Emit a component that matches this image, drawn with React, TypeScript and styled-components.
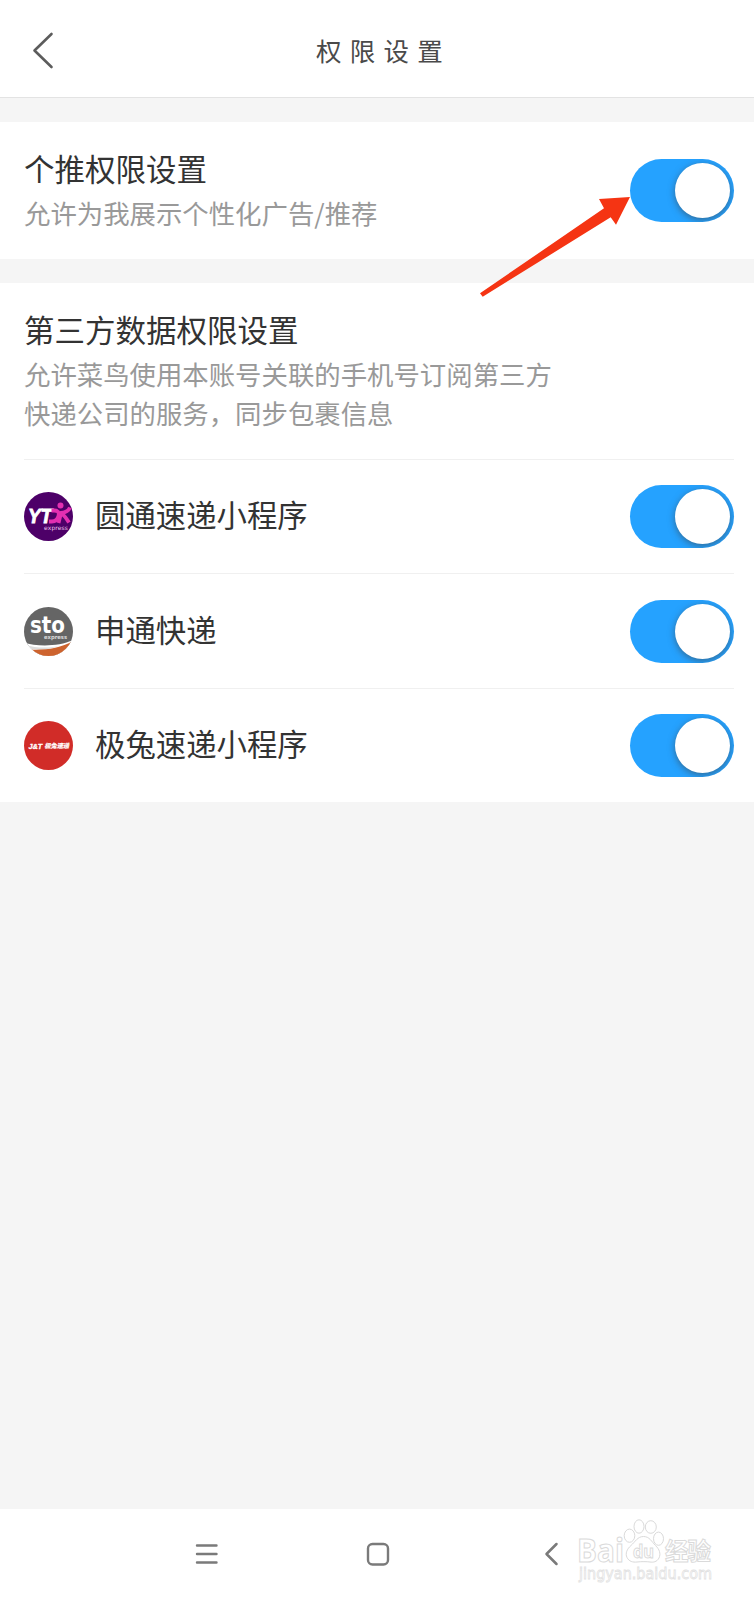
import React from 'react';
import styled, { createGlobalStyle } from 'styled-components';

const sans = '"Noto Sans CJK SC", sans-serif';

const GlobalStyle = createGlobalStyle`
  * { box-sizing: border-box; }
  body { margin: 0; background: #f5f5f5; font-family: ${sans}; color: #333; }
  svg { display: block; }
`;

const Screen = styled.div`
  position: relative;
  display: flex;
  flex-direction: column;
  width: 754px;
  height: 1600px;
  overflow: hidden;
  background: #f5f5f5;
`;

const Header = styled.header`
  display: grid;
  grid-template-columns: 80px 1fr 80px;
  align-items: center;
  height: 98px;
  background: #fff;
  border-bottom: 1px solid #e3e3e3;
`;

const BackButton = styled.button`
  display: flex;
  align-items: center;
  width: 80px;
  height: 64px;
  padding: 5px 0 0 30px;
  border: 0;
  background: none;
`;

const PageTitle = styled.h1`
  margin: 2px 0 0;
  text-align: center;
  font: 400 25.5px/40px "KaiTi", "Kaiti SC", "AR PL UKai CN", ${sans};
  letter-spacing: 8.2px;
  text-indent: 13px;
  color: #4a4a4a;
`;

const Card = styled.section<{ $top: number; $height: number }>`
  flex: none;
  margin-top: ${(p) => p.$top}px;
  height: ${(p) => p.$height}px;
  background: #fff;
`;

const Setting = styled.div<{ $height: number }>`
  display: flex;
  justify-content: space-between;
  height: ${(p) => p.$height}px;
  padding: 25px 20px 0 24px;
`;

const SettingTitle = styled.h2`
  margin: 0;
  font-weight: 400;
  font-size: 30.5px;
  line-height: 42px;
  white-space: nowrap;
`;

const SettingNote = styled.p`
  margin: 4px 0 0;
  font-size: 26.4px;
  line-height: 39.3px;
  color: #999;
  white-space: nowrap;
`;

const SwitchTrack = styled.button`
  display: flex;
  flex: none;
  align-items: center;
  justify-content: flex-end;
  width: 104px;
  height: 63px;
  padding: 0 4px;
  border: 0;
  border-radius: 32px;
  background: #25a2ff;
  overflow: hidden;
`;

const SwitchKnob = styled.span`
  width: 55px;
  height: 55px;
  border-radius: 50%;
  background: #fff;
  box-shadow: 0 2px 7px rgba(60, 60, 60, 0.55);
`;

const SwitchSlot = styled.div`
  padding-top: 12px;
`;

const CourierList = styled.ul`
  margin: 0;
  padding: 0 20px 0 24px;
  list-style: none;
`;

const CourierRow = styled.li`
  display: flex;
  align-items: center;
  height: 114.4px;
  border-top: 1px solid #f0f0f0;
`;

const CourierName = styled.span`
  flex: 1;
  margin: -5px 0 0 22px;
  font-size: 30.4px;
  line-height: 42px;
`;

const NavBar = styled.nav`
  display: flex;
  align-items: center;
  height: 91px;
  margin-top: auto;
  padding: 0 0 1px 194px;
  background: #fff;
`;

const NavItem = styled.div<{ $gap?: number }>`
  margin-left: ${(p) => p.$gap ?? 0}px;
`;

const Pointer = styled.svg`
  position: absolute;
  left: 476px;
  top: 190px;
`;

const Watermark = styled.svg`
  position: absolute;
  left: 570px;
  top: 1510px;
`;

function Toggle() {
  return (
    <SwitchTrack role="switch" aria-checked>
      <SwitchKnob />
    </SwitchTrack>
  );
}

function YtoLogo() {
  return (
    <svg width="49" height="49" viewBox="0 0 49 49">
      <circle cx="24.5" cy="24.5" r="24.5" fill="#4d0068" />
      <text x="4" y="31" fontFamily="Liberation Sans" fontWeight="700" fontStyle="italic" fontSize="20.500" fill="#fff" stroke="#fff" strokeWidth=".9" textLength="24" lengthAdjust="spacingAndGlyphs">YT</text>
      <g fill="none" stroke="#e32fb1" strokeWidth="3.800">
        <path d="M27.500 18.500h2.500c4 0 5.500 2 4.500 5.500s-3 5.500-6.500 5.500h-3" />
        <path d="M46 15.500c-1.500 3.500-4 5-9 5.500l-2.500 10M37.500 21.500c3 2 5 5 7.500 9" />
      </g>
      <circle cx="36.500" cy="13.500" r="3" fill="#e32fb1" />
      <text x="20" y="38" fontFamily="DejaVu Sans" fontSize="6" fill="#f0c4ec" textLength="24">express</text>
    </svg>
  );
}

function StoLogo() {
  return (
    <svg width="49" height="49" viewBox="0 0 49 49">
      <clipPath id="stoDisc"><circle cx="24.500" cy="24.500" r="24.500" /></clipPath>
      <g clipPath="url(#stoDisc)">
        <path fill="#656565" d="M0 0h49v49H0z" />
        <path fill="#fff" d="M0 35.500c12 4 34 4.500 49-2.500v16H0z" />
        <path fill="#dcdcdc" d="M1 38c11 3 23 3.500 34 1-13 4.500-23 4.500-31 2z" />
        <path fill="#cd632e" d="M5 42.500c15 1 31-1 44-8.500v15H5z" />
      </g>
      <text x="6" y="25.500" fontFamily="DejaVu Sans" fontWeight="700" fontSize="22.500" fill="#fff" textLength="35" lengthAdjust="spacingAndGlyphs">sto</text>
      <text x="20" y="32" fontFamily="DejaVu Sans" fontWeight="700" fontSize="5.500" fill="#ddd" textLength="23" lengthAdjust="spacingAndGlyphs">express</text>
    </svg>
  );
}

function JtLogo() {
  return (
    <svg width="49" height="49" viewBox="0 0 49 49">
      <circle cx="24.500" cy="24.500" r="24.500" fill="#d12c28" />
      <text x="4.500" y="27.700" fontFamily="Liberation Sans" fontWeight="700" fontStyle="italic" fontSize="8" fill="#fff" stroke="#fff" strokeWidth=".3" textLength="13.800" lengthAdjust="spacingAndGlyphs">J&amp;T</text>
      <text x="20.500" y="27.300" fontFamily="Noto Sans CJK SC" fontWeight="700" fontStyle="italic" fontSize="6.200" fill="#fff" stroke="#fff" strokeWidth=".2" textLength="24.500">极兔速递</text>
    </svg>
  );
}

const couriers = [
  { name: '圆通速递小程序', Logo: YtoLogo },
  { name: '申通快递', Logo: StoLogo },
  { name: '极兔速递小程序', Logo: JtLogo },
];

export default function App() {
  return (
    <Screen>
      <GlobalStyle />
      <Header>
        <BackButton aria-label="返回">
          <svg width="26" height="38" viewBox="0 0 26 38" fill="none" stroke="#5c5c5c" strokeWidth="2.600" strokeLinecap="round" strokeLinejoin="round">
            <path d="M21.500 2L4.500 18.500l17 16.500" />
          </svg>
        </BackButton>
        <PageTitle>权限设置</PageTitle>
      </Header>

      <Card $top={24} $height={137}>
        <Setting $height={137}>
          <div>
            <SettingTitle>个推权限设置</SettingTitle>
            <SettingNote>允许为我展示个性化广告/推荐</SettingNote>
          </div>
          <SwitchSlot><Toggle /></SwitchSlot>
        </Setting>
      </Card>

      <Card $top={24} $height={519}>
        <Setting $height={176}>
          <div>
            <SettingTitle>第三方数据权限设置</SettingTitle>
            <SettingNote>允许菜鸟使用本账号关联的手机号订阅第三方<br />快递公司的服务，同步包裹信息</SettingNote>
          </div>
        </Setting>
        <CourierList>
          {couriers.map(({ name, Logo }) => (
            <CourierRow key={name}>
              <Logo />
              <CourierName>{name}</CourierName>
              <Toggle />
            </CourierRow>
          ))}
        </CourierList>
      </Card>

      <NavBar>
        <NavItem>
          <svg width="26" height="26" viewBox="0 0 26 26" stroke="#7a7a7a" strokeWidth="2.400" strokeLinecap="round">
            <path d="M3 4.500h19.500M3 13h19.500M3 21.500h19.500" />
          </svg>
        </NavItem>
        <NavItem $gap={145}>
          <svg width="26" height="26" viewBox="0 0 26 26" fill="none" stroke="#7a7a7a" strokeWidth="2.400">
            <rect x="3" y="3" width="20" height="20.500" rx="4.500" />
          </svg>
        </NavItem>
        <NavItem $gap={151}>
          <svg width="26" height="26" viewBox="0 0 26 26" fill="none" stroke="#7a7a7a" strokeWidth="2.500" strokeLinecap="round" strokeLinejoin="round">
            <path d="M14.500 3L4.500 13l10 10" />
          </svg>
        </NavItem>
      </NavBar>

      <Pointer width="160" height="112" viewBox="476 190 160 112">
        <path fill="#f53413" d="M630 197l-31 2 5 9.300-124 85 2.700 3.400 128-79.400 5.300 7.400z" />
      </Pointer>

      <Watermark width="160" height="84" viewBox="570 1510 160 84" fill="#fff" stroke="#dadada" strokeWidth="1">
        <text x="577" y="1561.500" fontFamily="Open Sans" fontWeight="700" fontSize="31.500" textLength="47" lengthAdjust="spacingAndGlyphs">Bai</text>
        <path d="M643.500 1536.500c6 0 8 5 12 9s5.500 8 3.500 12.500c-2 4-6 4.500-9 4s-9-.500-13 0-8-.500-10-4.500 0-8.500 4-12 6.500-9 12.500-9z" />
        <ellipse cx="639" cy="1526.500" rx="5" ry="6.700" />
        <ellipse cx="650.800" cy="1527" rx="5.500" ry="6.300" />
        <ellipse cx="629.500" cy="1535.700" rx="5.300" ry="6.600" />
        <ellipse cx="658.500" cy="1538.700" rx="5" ry="6.600" />
        <text x="633" y="1558" fontFamily="Open Sans" fontWeight="700" fontSize="18" textLength="21" lengthAdjust="spacingAndGlyphs">du</text>
        <text x="665" y="1559.500" fontFamily="Noto Sans CJK SC" fontWeight="700" fontSize="23.500" textLength="46">经验</text>
        <text x="579" y="1578.500" fontFamily="DejaVu Sans" fontSize="15.500" stroke="#e2e2e2" strokeWidth=".8" textLength="133" lengthAdjust="spacingAndGlyphs">jingyan.baidu.com</text>
      </Watermark>
    </Screen>
  );
}
